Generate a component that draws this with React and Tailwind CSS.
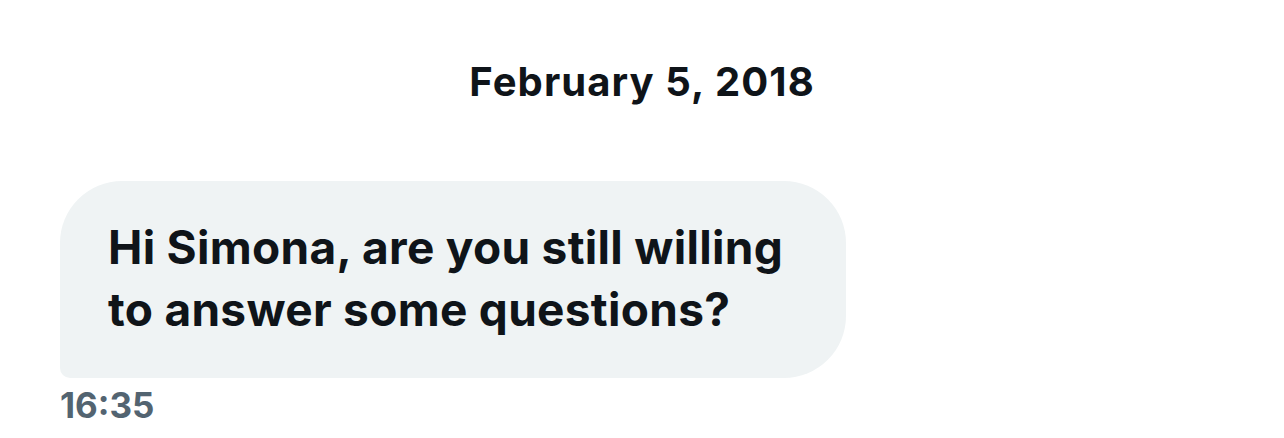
export default function App() {
  return (
    <div className="w-[1284px] h-[438px] bg-white overflow-hidden font-['Inter',sans-serif] text-[#0f1419]">
      <div className="pt-[58px] text-center text-[40px] leading-[48px] font-bold tracking-[1.1px]">
        February 5, 2018
      </div>
      <div className="mt-[75px] pl-[60px]">
        <div className="w-[786px] bg-[#eff3f4] rounded-[62px] rounded-bl-[10px] pl-[48px] pr-[48px] pt-[35px] pb-[38px] text-[46px] leading-[62px] font-bold tracking-[0.3px]">
          Hi Simona, are you still willing
          <br />
          to answer some questions?
        </div>
        <div className="mt-[7px] text-[35px] leading-[40px] font-bold text-[#536471]">16:35</div>
      </div>
    </div>
  );
}
